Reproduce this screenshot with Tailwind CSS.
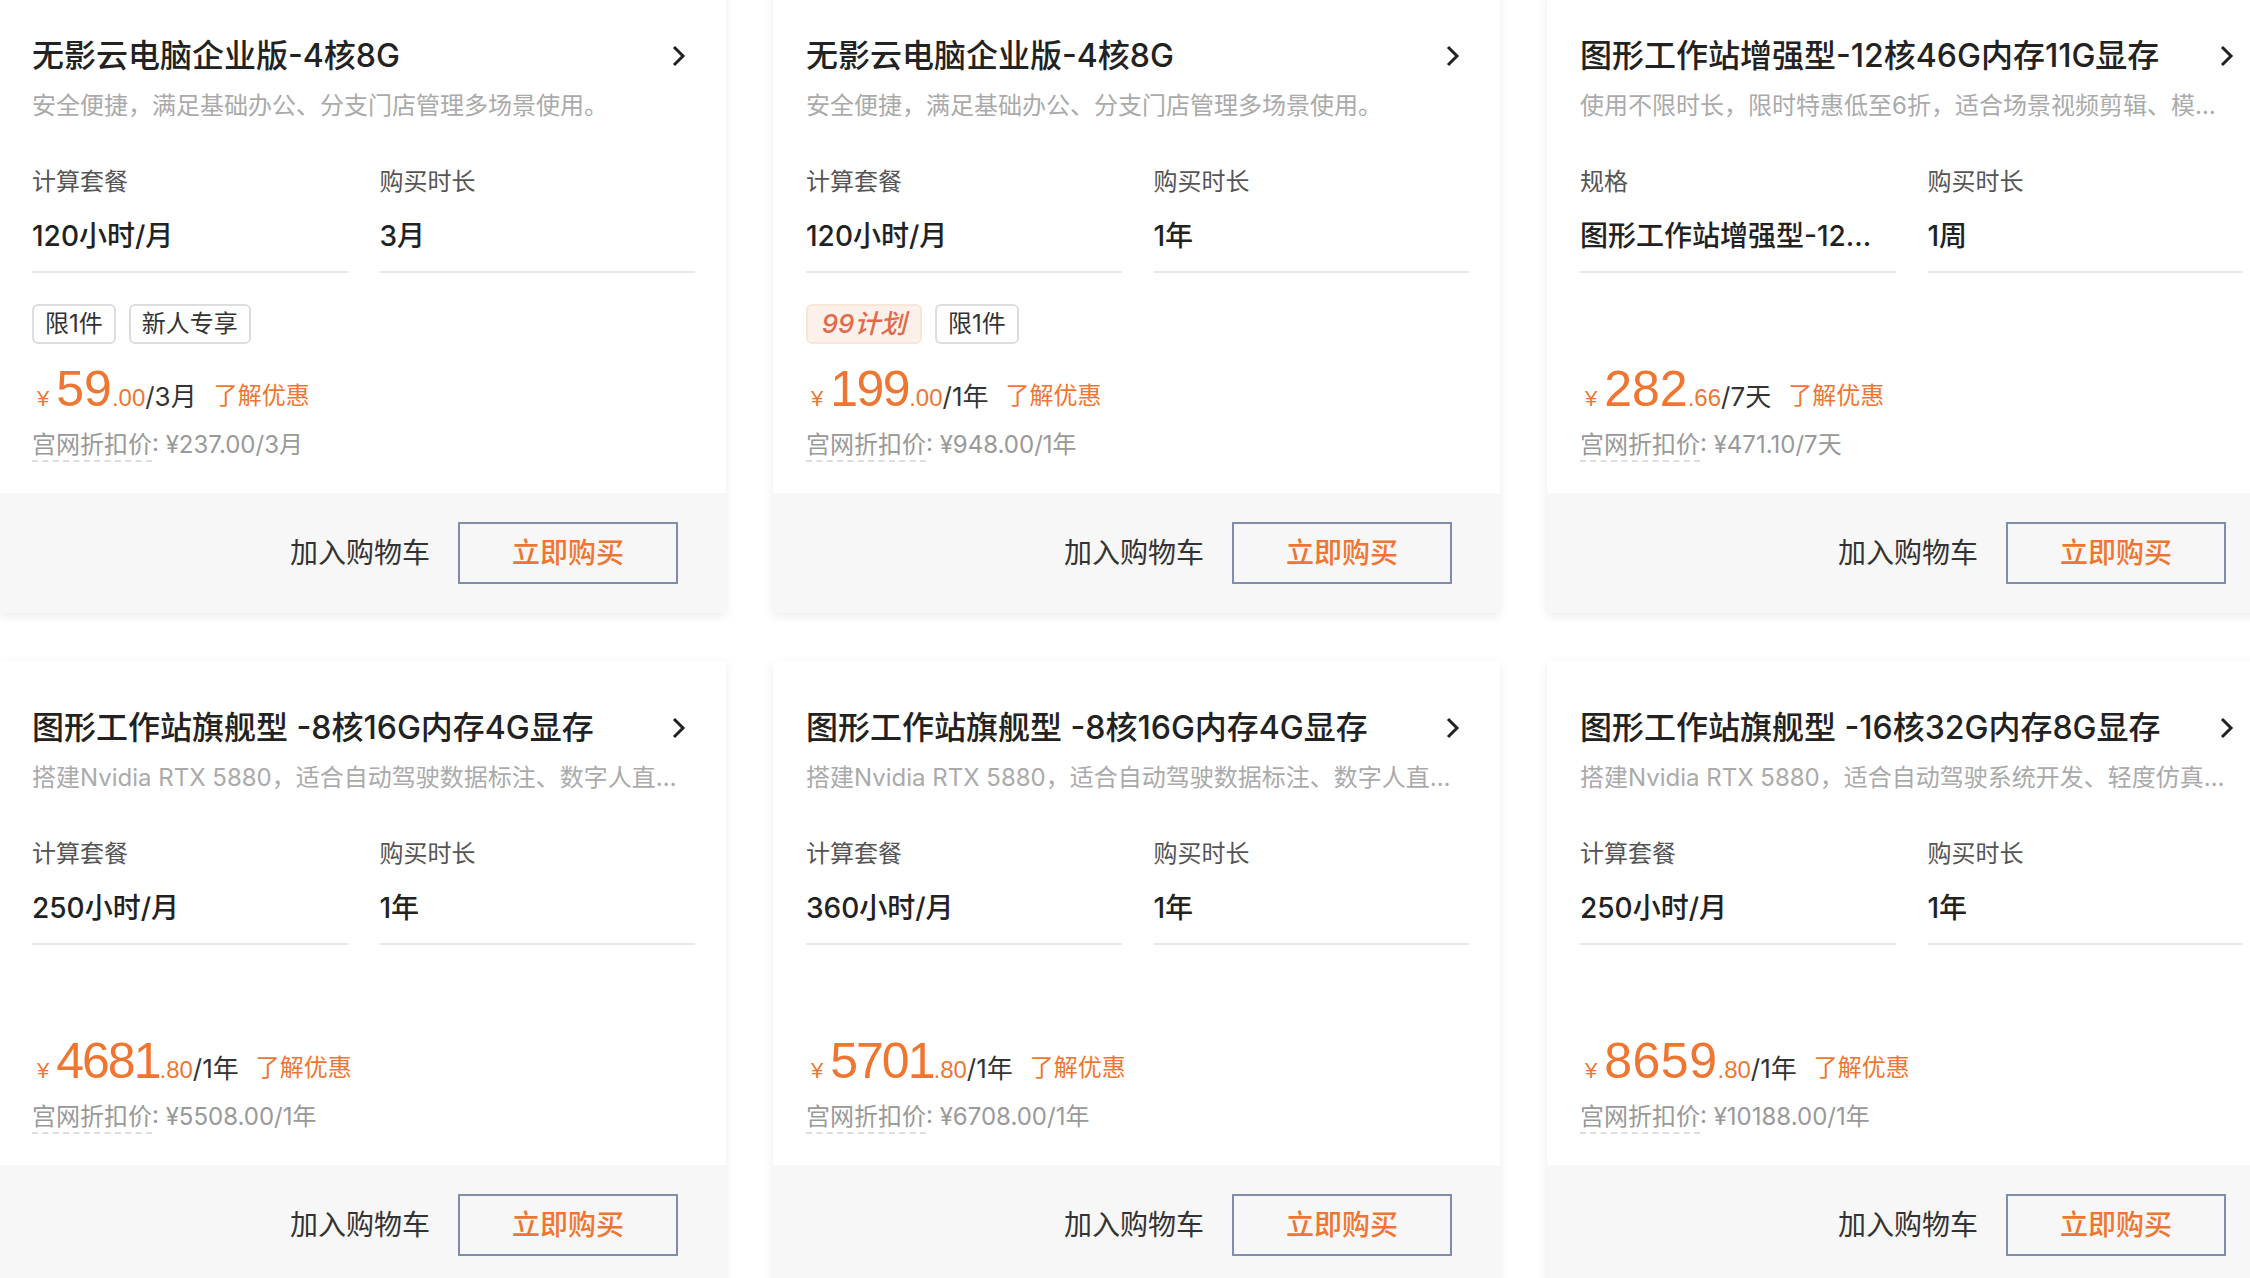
<!DOCTYPE html>
<html lang="zh-CN">
<head>
    <meta charset="UTF-8">
    <meta name="viewport" content="width=device-width, initial-scale=1.0">
    <title>无影云电脑</title>
    <script src="https://cdn.jsdelivr.net/npm/@tailwindcss/browser@4"></script>
</head>
<body class="bg-white h-[1278px] overflow-hidden font-['Inter','Noto_Sans_CJK_SC',sans-serif] text-[#333]">
    <div class="grid grid-cols-[727px_727px_727px] gap-x-[47px] gap-y-[48px] w-[2400px] -mt-[11px] -ml-px">

        <!-- card 1 -->
        <div class="flex flex-col h-[624px] bg-white shadow-[0_3px_10px_rgba(0,0,0,0.08)]">
            <div class="flex items-center justify-between h-[36px] mt-[49px] pl-[33px] pr-[39px]">
                <h2 class="text-[32px] leading-[36px] font-medium text-[#222] whitespace-nowrap">无影云电脑企业版-4核8G</h2>
                <svg class="w-[16px] h-[24px]" viewBox="0 0 16 24" fill="none" stroke="#222" stroke-width="3"><path d="M3 3l9 9-9 9"/></svg>
            </div>
            <p class="w-[650px] h-[34px] mt-[15px] ml-[33px] text-[24px] leading-[34px] text-[#aaa] truncate">安全便捷，满足基础办公、分支门店管理多场景使用。</p>
            <div class="grid grid-cols-2 gap-x-[32px] w-[663px] ml-[33px] mt-[42px]">
                <div class="h-[108px] border-b-2 border-[#e8e8e8]">
                    <div class="h-[34px] text-[24px] leading-[34px] text-[#555]">计算套餐</div>
                    <div class="h-[40px] mt-[17px] text-[28px] leading-[40px] font-medium text-[#222] truncate">120小时/月</div>
                </div>
                <div class="h-[108px] border-b-2 border-[#e8e8e8]">
                    <div class="h-[34px] text-[24px] leading-[34px] text-[#555]">购买时长</div>
                    <div class="h-[40px] mt-[17px] text-[28px] leading-[40px] font-medium text-[#222] truncate">3月</div>
                </div>
            </div>
            <div class="flex gap-[13px] h-[40px] mt-[31px] ml-[33px]">
                <span class="px-[11px] border-2 border-[#ddd] rounded-[6px] text-[24px] leading-[36px] text-[#333]">限1件</span>
                <span class="px-[11px] border-2 border-[#ddd] rounded-[6px] text-[24px] leading-[36px] text-[#333]">新人专享</span>
            </div>
            <div class="flex items-baseline h-[50px] mt-[20px] ml-[38px] text-[24px] leading-[50px] text-[#ef7631]">
                <span class="font-['Liberation_Sans'] text-[22px] mr-[7px]">¥</span><span class="font-['Liberation_Sans'] text-[50px]">59</span><span class="font-['Liberation_Sans']">.00</span><span class="text-[26px] text-[#333]">/3月</span><span class="ml-[17px] -translate-y-[2px]">了解优惠</span>
            </div>
            <p class="h-[34px] mt-[14px] ml-[33px] text-[24px] leading-[34px] text-[#999]"><span class="inline-block h-[34px] border-b-2 border-dashed border-[#ddd]">宫网折扣价</span>: ¥237.00/3月</p>
            <div class="flex items-center justify-end gap-[28px] h-[120px] mt-auto pr-[48px] bg-[#f7f7f7]">
                <span class="text-[28px] text-[#333]">加入购物车</span>
                <button class="w-[220px] h-[62px] border-2 border-[#7f8daf] text-[28px] font-medium text-[#ef7631]">立即购买</button>
            </div>
        </div>

        <!-- card 2 -->
        <div class="flex flex-col h-[624px] bg-white shadow-[0_3px_10px_rgba(0,0,0,0.08)]">
            <div class="flex items-center justify-between h-[36px] mt-[49px] pl-[33px] pr-[39px]">
                <h2 class="text-[32px] leading-[36px] font-medium text-[#222] whitespace-nowrap">无影云电脑企业版-4核8G</h2>
                <svg class="w-[16px] h-[24px]" viewBox="0 0 16 24" fill="none" stroke="#222" stroke-width="3"><path d="M3 3l9 9-9 9"/></svg>
            </div>
            <p class="w-[650px] h-[34px] mt-[15px] ml-[33px] text-[24px] leading-[34px] text-[#aaa] truncate">安全便捷，满足基础办公、分支门店管理多场景使用。</p>
            <div class="grid grid-cols-2 gap-x-[32px] w-[663px] ml-[33px] mt-[42px]">
                <div class="h-[108px] border-b-2 border-[#e8e8e8]">
                    <div class="h-[34px] text-[24px] leading-[34px] text-[#555]">计算套餐</div>
                    <div class="h-[40px] mt-[17px] text-[28px] leading-[40px] font-medium text-[#222] truncate">120小时/月</div>
                </div>
                <div class="h-[108px] border-b-2 border-[#e8e8e8]">
                    <div class="h-[34px] text-[24px] leading-[34px] text-[#555]">购买时长</div>
                    <div class="h-[40px] mt-[17px] text-[28px] leading-[40px] font-medium text-[#222] truncate">1年</div>
                </div>
            </div>
            <div class="flex gap-[13px] h-[40px] mt-[31px] ml-[33px]">
                <span class="w-[116px] text-center border-2 border-[#f8e6d9] bg-[#fbf1ea] rounded-[6px] text-[26px] leading-[36px] italic font-medium text-[#e2694a]">99计划</span>
                <span class="px-[11px] border-2 border-[#ddd] rounded-[6px] text-[24px] leading-[36px] text-[#333]">限1件</span>
            </div>
            <div class="flex items-baseline h-[50px] mt-[20px] ml-[38px] text-[24px] leading-[50px] text-[#ef7631]">
                <span class="font-['Liberation_Sans'] text-[22px] mr-[7px]">¥</span><span class="font-['Liberation_Sans'] text-[50px] tracking-[-1.5px]">199</span><span class="font-['Liberation_Sans']">.00</span><span class="text-[26px] text-[#333]">/1年</span><span class="ml-[17px] -translate-y-[2px]">了解优惠</span>
            </div>
            <p class="h-[34px] mt-[14px] ml-[33px] text-[24px] leading-[34px] text-[#999]"><span class="inline-block h-[34px] border-b-2 border-dashed border-[#ddd]">宫网折扣价</span>: ¥948.00/1年</p>
            <div class="flex items-center justify-end gap-[28px] h-[120px] mt-auto pr-[48px] bg-[#f7f7f7]">
                <span class="text-[28px] text-[#333]">加入购物车</span>
                <button class="w-[220px] h-[62px] border-2 border-[#7f8daf] text-[28px] font-medium text-[#ef7631]">立即购买</button>
            </div>
        </div>

        <!-- card 3 -->
        <div class="flex flex-col h-[624px] bg-white shadow-[0_3px_10px_rgba(0,0,0,0.08)]">
            <div class="flex items-center justify-between h-[36px] mt-[49px] pl-[33px] pr-[39px]">
                <h2 class="text-[32px] leading-[36px] font-medium text-[#222] whitespace-nowrap">图形工作站增强型-12核46G内存11G显存</h2>
                <svg class="w-[16px] h-[24px]" viewBox="0 0 16 24" fill="none" stroke="#222" stroke-width="3"><path d="M3 3l9 9-9 9"/></svg>
            </div>
            <p class="w-[650px] h-[34px] mt-[15px] ml-[33px] text-[24px] leading-[34px] text-[#aaa] truncate">使用不限时长，限时特惠低至6折，适合场景视频剪辑、模型渲染使用。</p>
            <div class="grid grid-cols-2 gap-x-[32px] w-[663px] ml-[33px] mt-[42px]">
                <div class="h-[108px] border-b-2 border-[#e8e8e8]">
                    <div class="h-[34px] text-[24px] leading-[34px] text-[#555]">规格</div>
                    <div class="h-[40px] mt-[17px] text-[28px] leading-[40px] font-medium text-[#222] truncate">图形工作站增强型-12核46G内存</div>
                </div>
                <div class="h-[108px] border-b-2 border-[#e8e8e8]">
                    <div class="h-[34px] text-[24px] leading-[34px] text-[#555]">购买时长</div>
                    <div class="h-[40px] mt-[17px] text-[28px] leading-[40px] font-medium text-[#222] truncate">1周</div>
                </div>
            </div>
            <div class="h-[40px] mt-[31px]"></div>
            <div class="flex items-baseline h-[50px] mt-[20px] ml-[38px] text-[24px] leading-[50px] text-[#ef7631]">
                <span class="font-['Liberation_Sans'] text-[22px] mr-[7px]">¥</span><span class="font-['Liberation_Sans'] text-[50px]">282</span><span class="font-['Liberation_Sans']">.66</span><span class="text-[26px] text-[#333]">/7天</span><span class="ml-[17px] -translate-y-[2px]">了解优惠</span>
            </div>
            <p class="h-[34px] mt-[14px] ml-[33px] text-[24px] leading-[34px] text-[#999]"><span class="inline-block h-[34px] border-b-2 border-dashed border-[#ddd]">宫网折扣价</span>: ¥471.10/7天</p>
            <div class="flex items-center justify-end gap-[28px] h-[120px] mt-auto pr-[48px] bg-[#f7f7f7]">
                <span class="text-[28px] text-[#333]">加入购物车</span>
                <button class="w-[220px] h-[62px] border-2 border-[#7f8daf] text-[28px] font-medium text-[#ef7631]">立即购买</button>
            </div>
        </div>

        <!-- card 4 -->
        <div class="flex flex-col h-[624px] bg-white shadow-[0_3px_10px_rgba(0,0,0,0.08)]">
            <div class="flex items-center justify-between h-[36px] mt-[49px] pl-[33px] pr-[39px]">
                <h2 class="text-[32px] leading-[36px] font-medium text-[#222] whitespace-nowrap">图形工作站旗舰型 -8核16G内存4G显存</h2>
                <svg class="w-[16px] h-[24px]" viewBox="0 0 16 24" fill="none" stroke="#222" stroke-width="3"><path d="M3 3l9 9-9 9"/></svg>
            </div>
            <p class="w-[650px] h-[34px] mt-[15px] ml-[33px] text-[24px] leading-[34px] text-[#aaa] truncate">搭建Nvidia RTX 5880，适合自动驾驶数据标注、数字人直播等场景使用。</p>
            <div class="grid grid-cols-2 gap-x-[32px] w-[663px] ml-[33px] mt-[42px]">
                <div class="h-[108px] border-b-2 border-[#e8e8e8]">
                    <div class="h-[34px] text-[24px] leading-[34px] text-[#555]">计算套餐</div>
                    <div class="h-[40px] mt-[17px] text-[28px] leading-[40px] font-medium text-[#222] truncate">250小时/月</div>
                </div>
                <div class="h-[108px] border-b-2 border-[#e8e8e8]">
                    <div class="h-[34px] text-[24px] leading-[34px] text-[#555]">购买时长</div>
                    <div class="h-[40px] mt-[17px] text-[28px] leading-[40px] font-medium text-[#222] truncate">1年</div>
                </div>
            </div>
            <div class="h-[40px] mt-[31px]"></div>
            <div class="flex items-baseline h-[50px] mt-[20px] ml-[38px] text-[24px] leading-[50px] text-[#ef7631]">
                <span class="font-['Liberation_Sans'] text-[22px] mr-[7px]">¥</span><span class="font-['Liberation_Sans'] text-[50px] tracking-[-2px]">4681</span><span class="font-['Liberation_Sans']">.80</span><span class="text-[26px] text-[#333]">/1年</span><span class="ml-[17px] -translate-y-[2px]">了解优惠</span>
            </div>
            <p class="h-[34px] mt-[14px] ml-[33px] text-[24px] leading-[34px] text-[#999]"><span class="inline-block h-[34px] border-b-2 border-dashed border-[#ddd]">宫网折扣价</span>: ¥5508.00/1年</p>
            <div class="flex items-center justify-end gap-[28px] h-[120px] mt-auto pr-[48px] bg-[#f7f7f7]">
                <span class="text-[28px] text-[#333]">加入购物车</span>
                <button class="w-[220px] h-[62px] border-2 border-[#7f8daf] text-[28px] font-medium text-[#ef7631]">立即购买</button>
            </div>
        </div>

        <!-- card 5 -->
        <div class="flex flex-col h-[624px] bg-white shadow-[0_3px_10px_rgba(0,0,0,0.08)]">
            <div class="flex items-center justify-between h-[36px] mt-[49px] pl-[33px] pr-[39px]">
                <h2 class="text-[32px] leading-[36px] font-medium text-[#222] whitespace-nowrap">图形工作站旗舰型 -8核16G内存4G显存</h2>
                <svg class="w-[16px] h-[24px]" viewBox="0 0 16 24" fill="none" stroke="#222" stroke-width="3"><path d="M3 3l9 9-9 9"/></svg>
            </div>
            <p class="w-[650px] h-[34px] mt-[15px] ml-[33px] text-[24px] leading-[34px] text-[#aaa] truncate">搭建Nvidia RTX 5880，适合自动驾驶数据标注、数字人直播等场景使用。</p>
            <div class="grid grid-cols-2 gap-x-[32px] w-[663px] ml-[33px] mt-[42px]">
                <div class="h-[108px] border-b-2 border-[#e8e8e8]">
                    <div class="h-[34px] text-[24px] leading-[34px] text-[#555]">计算套餐</div>
                    <div class="h-[40px] mt-[17px] text-[28px] leading-[40px] font-medium text-[#222] truncate">360小时/月</div>
                </div>
                <div class="h-[108px] border-b-2 border-[#e8e8e8]">
                    <div class="h-[34px] text-[24px] leading-[34px] text-[#555]">购买时长</div>
                    <div class="h-[40px] mt-[17px] text-[28px] leading-[40px] font-medium text-[#222] truncate">1年</div>
                </div>
            </div>
            <div class="h-[40px] mt-[31px]"></div>
            <div class="flex items-baseline h-[50px] mt-[20px] ml-[38px] text-[24px] leading-[50px] text-[#ef7631]">
                <span class="font-['Liberation_Sans'] text-[22px] mr-[7px]">¥</span><span class="font-['Liberation_Sans'] text-[50px] tracking-[-2px]">5701</span><span class="font-['Liberation_Sans']">.80</span><span class="text-[26px] text-[#333]">/1年</span><span class="ml-[17px] -translate-y-[2px]">了解优惠</span>
            </div>
            <p class="h-[34px] mt-[14px] ml-[33px] text-[24px] leading-[34px] text-[#999]"><span class="inline-block h-[34px] border-b-2 border-dashed border-[#ddd]">宫网折扣价</span>: ¥6708.00/1年</p>
            <div class="flex items-center justify-end gap-[28px] h-[120px] mt-auto pr-[48px] bg-[#f7f7f7]">
                <span class="text-[28px] text-[#333]">加入购物车</span>
                <button class="w-[220px] h-[62px] border-2 border-[#7f8daf] text-[28px] font-medium text-[#ef7631]">立即购买</button>
            </div>
        </div>

        <!-- card 6 -->
        <div class="flex flex-col h-[624px] bg-white shadow-[0_3px_10px_rgba(0,0,0,0.08)]">
            <div class="flex items-center justify-between h-[36px] mt-[49px] pl-[33px] pr-[39px]">
                <h2 class="text-[32px] leading-[36px] font-medium text-[#222] whitespace-nowrap">图形工作站旗舰型 -16核32G内存8G显存</h2>
                <svg class="w-[16px] h-[24px]" viewBox="0 0 16 24" fill="none" stroke="#222" stroke-width="3"><path d="M3 3l9 9-9 9"/></svg>
            </div>
            <p class="w-[650px] h-[34px] mt-[15px] ml-[33px] text-[24px] leading-[34px] text-[#aaa] truncate">搭建Nvidia RTX 5880，适合自动驾驶系统开发、轻度仿真等场景使用。</p>
            <div class="grid grid-cols-2 gap-x-[32px] w-[663px] ml-[33px] mt-[42px]">
                <div class="h-[108px] border-b-2 border-[#e8e8e8]">
                    <div class="h-[34px] text-[24px] leading-[34px] text-[#555]">计算套餐</div>
                    <div class="h-[40px] mt-[17px] text-[28px] leading-[40px] font-medium text-[#222] truncate">250小时/月</div>
                </div>
                <div class="h-[108px] border-b-2 border-[#e8e8e8]">
                    <div class="h-[34px] text-[24px] leading-[34px] text-[#555]">购买时长</div>
                    <div class="h-[40px] mt-[17px] text-[28px] leading-[40px] font-medium text-[#222] truncate">1年</div>
                </div>
            </div>
            <div class="h-[40px] mt-[31px]"></div>
            <div class="flex items-baseline h-[50px] mt-[20px] ml-[38px] text-[24px] leading-[50px] text-[#ef7631]">
                <span class="font-['Liberation_Sans'] text-[22px] mr-[7px]">¥</span><span class="font-['Liberation_Sans'] text-[50px] tracking-[0.5px]">8659</span><span class="font-['Liberation_Sans']">.80</span><span class="text-[26px] text-[#333]">/1年</span><span class="ml-[17px] -translate-y-[2px]">了解优惠</span>
            </div>
            <p class="h-[34px] mt-[14px] ml-[33px] text-[24px] leading-[34px] text-[#999]"><span class="inline-block h-[34px] border-b-2 border-dashed border-[#ddd]">宫网折扣价</span>: ¥10188.00/1年</p>
            <div class="flex items-center justify-end gap-[28px] h-[120px] mt-auto pr-[48px] bg-[#f7f7f7]">
                <span class="text-[28px] text-[#333]">加入购物车</span>
                <button class="w-[220px] h-[62px] border-2 border-[#7f8daf] text-[28px] font-medium text-[#ef7631]">立即购买</button>
            </div>
        </div>

    </div>
</body>
</html>
